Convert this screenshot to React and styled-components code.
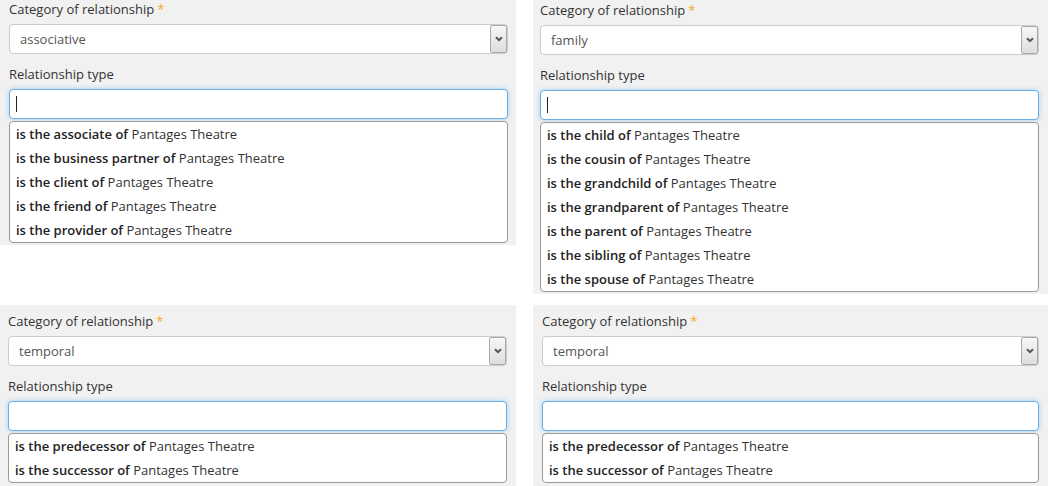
import React from "react";
import styled, { createGlobalStyle } from "styled-components";

const Global = createGlobalStyle`
  html, body { margin: 0; padding: 0; background: #fff; overflow: hidden; }
  body { font-family: "Open Sans", "Liberation Sans", sans-serif; color: #333; }
  * { box-sizing: border-box; }
`;

const Page = styled.div`
  display: grid;
  grid-template-columns: 516px 1fr;
  column-gap: 17px;
  row-gap: 11px;
  align-items: start;
  margin-top: -7px;
`;

const Panel = styled.section`
  background: #f1f1f1;
  padding: ${(p) => p.$pt}px ${(p) => p.$pr}px 2px ${(p) => p.$pl}px;
  display: flex;
  flex-direction: column;
  min-height: ${(p) => p.$minH || 0}px;
`;

const Label = styled.div`
  font-size: 13px;
  line-height: 18px;
  color: #333;
  margin: ${(p) => (p.$first ? 0 : 11)}px 0 6px;
`;

const Star = styled.span`
  color: #f5a623;
  margin-left: 3px;
`;

const Select = styled.div`
  height: 30px;
  border: 1px solid #cccccc;
  border-radius: 4px;
  background: #fff;
  display: flex;
  align-items: stretch;
`;

const SelectValue = styled.div`
  flex: 1;
  font-size: 13px;
  color: #555;
  padding-left: 10px;
  display: flex;
  align-items: center;
`;

const Arrow = styled.div`
  width: 17px;
  background: linear-gradient(#f6f6f6, #dedede);
  border: 1px solid #a9a9a9;
  border-radius: 2px;
  display: flex;
  align-items: center;
  justify-content: center;
`;

const Input = styled.div`
  height: 30px;
  border: 1px solid #66afe9;
  border-radius: 4px;
  background: #fff;
  box-shadow: 0 0 5px rgba(102, 175, 233, 0.55);
  display: flex;
  align-items: center;
  padding-left: 6px;
`;

const Caret = styled.span`
  width: 1px;
  height: 16px;
  background: #222;
`;

const List = styled.ul`
  list-style: none;
  margin: 2px 0 0;
  padding: 0;
  border: 1px solid #9a9a9a;
  border-radius: 4px;
  background: #fff;
`;

const Item = styled.li`
  height: 24px;
  line-height: 24px;
  font-size: 13px;
  color: #333;
  padding-left: 6px;
  white-space: nowrap;
`;

const Bold = styled.b`
  font-weight: 600;
  color: #222;
`;

const Chevron = () => (
  <svg width="8" height="6" viewBox="0 0 8 6">
    <path d="M1 1.2 L4 4.2 L7 1.2" fill="none" stroke="#555" strokeWidth="2" />
  </svg>
);

const panels = [
  {
    value: "associative",
    focused: true,
    pt: 7, pl: 9, pr: 8,
    items: ["associate", "business partner", "client", "friend", "provider"],
  },
  {
    value: "family",
    focused: true,
    pt: 8, pl: 7, pr: 9,
    items: ["child", "cousin", "grandchild", "grandparent", "parent", "sibling", "spouse"],
  },
  {
    value: "temporal",
    focused: false,
    pt: 7, pl: 8, pr: 9,
    minH: 200,
    items: ["predecessor", "successor"],
  },
  {
    value: "temporal",
    focused: false,
    pt: 7, pl: 9, pr: 9,
    minH: 200,
    items: ["predecessor", "successor"],
  },
];

function RelationPanel({ p }) {
  return (
    <Panel $pt={p.pt} $pl={p.pl} $pr={p.pr} $minH={p.minH}>
      <Label $first>
        Category of relationship<Star>*</Star>
      </Label>
      <Select>
        <SelectValue>{p.value}</SelectValue>
        <Arrow>
          <Chevron />
        </Arrow>
      </Select>
      <Label>Relationship type</Label>
      <Input>{p.focused && <Caret />}</Input>
      <List>
        {p.items.map((it) => (
          <Item key={it}>
            <Bold>is the {it} of</Bold> Pantages Theatre
          </Item>
        ))}
      </List>
    </Panel>
  );
}

export default function App() {
  return (
    <>
      <Global />
      <Page>
        {panels.map((p, i) => (
          <RelationPanel key={i} p={p} />
        ))}
      </Page>
    </>
  );
}
